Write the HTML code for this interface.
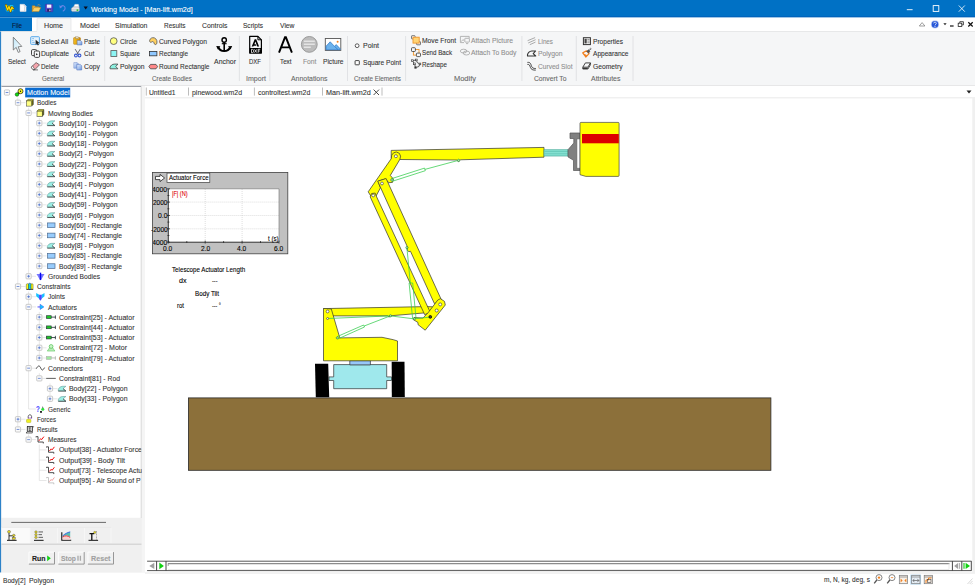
<!DOCTYPE html>
<html><head><meta charset="utf-8"><title>Working Model - [Man-lift.wm2d]</title>
<style>
html,body{margin:0;padding:0;width:975px;height:585px;overflow:hidden;background:#fff;font-family:"Liberation Sans", sans-serif;}
#app{position:relative;width:975px;height:585px;overflow:hidden;}
#g{position:absolute;left:0;top:0;}
.t{position:absolute;-webkit-text-stroke:0.1px currentColor;white-space:pre;transform-origin:0 50%;font-family:"Liberation Sans", sans-serif;display:block;}
</style></head><body><div id="app">
<svg id="g" width="975" height="585" viewBox="0 0 975 585">
<!-- 00_bg.svg -->
<rect x="0" y="0" width="975" height="585" fill="#fff"/>
<!-- title bar -->
<rect x="0" y="0" width="975" height="17.500" fill="#0071c5"/><rect x="0" y="16.300" width="975" height="1.200" fill="#0060b8"/>
<!-- menu row -->
<rect x="0" y="17.500" width="975" height="14" fill="#fff"/>
<rect x="0" y="17.400" width="32" height="14.100" fill="#0071c5"/>
<rect x="37" y="18.5" width="34" height="14" fill="#f5f6f7"/>
<path d="M37 31.5V18.5H71V31.5" fill="none" stroke="#e2e3e4" stroke-width="0.7"/>
<!-- ribbon -->
<rect x="0" y="31.5" width="975" height="53.5" fill="#f5f6f7"/>
<path d="M0 31.5H37M71 31.5H975" stroke="#e2e3e4" stroke-width="0.8"/>
<rect x="37.4" y="30" width="33.2" height="3" fill="#f5f6f7"/>
<rect x="0" y="85" width="975" height="0.8" fill="#dadbdc"/>
<g stroke="#dcdddf" stroke-width="0.8">
<path d="M104.7 36V81M239.4 36V81M269.8 36V81M347.5 36V81M405.6 36V81M521.9 36V81M576.3 36V81M633 36V81"/>
</g>
<!-- left panel -->
<rect x="0" y="85.8" width="145" height="487" fill="#f0f0f0"/>
<rect x="1.5" y="86.5" width="139.7" height="431.3" fill="#fff"/>
<path d="M1.5 86.5H141.2" stroke="#828790" stroke-width="0.8"/>
<path d="M141.2 86.5V518" stroke="#c8c8c8" stroke-width="0.7"/>
<rect x="141.8" y="85.8" width="3.2" height="487" fill="#f5f5f5"/>
<rect x="0" y="31.500" width="1.100" height="541" fill="#2d82c8"/>
<!-- tab bar -->
<rect x="145" y="85.8" width="830" height="12" fill="#fff"/>
<path d="M145 97.8H975" stroke="#e4e4e4" stroke-width="0.8"/>
<g stroke="#a0a0a0" stroke-width="0.7"><path d="M146.3 87.5V95.6M188.5 87.5V95.6M254.4 87.5V95.6M322.5 87.5V95.6M382 87.5V95.6"/></g>
<path d="M373.6 89.6L379 95M379 89.6L373.6 95" stroke="#333" stroke-width="0.9" fill="none"/>
<path d="M966.5 90.5h5l-2.5 3z" fill="#222"/>
<!-- status bar -->
<rect x="0" y="572.8" width="975" height="12.2" fill="#fff"/>
<path d="M145 573H975" stroke="#e0e0e0" stroke-width="0.8"/>
<rect x="972.3" y="98" width="2.7" height="475" fill="#f0f0f0"/>

<!-- 10_title_icons.svg -->
<!-- app icon -->
<g>
<rect x="5.800" y="5" width="7.600" height="6.400" fill="#18c0e8" rx="1"/>
<path d="M6 5.2l1.6 4.8 1.4-3.6 1.5 5 1.4-4.2 1.3 1.4" fill="none" stroke="#705000" stroke-width="2.2" stroke-linejoin="round" stroke-linecap="round"/>
<path d="M6 5.2l1.6 4.8 1.4-3.6 1.5 5 1.4-4.2 1.3 1.4" fill="none" stroke="#ffe000" stroke-width="1.2" stroke-linejoin="round" stroke-linecap="round"/>
</g>
<!-- new -->
<path d="M20 4.3h4.2l1.9 1.9v5.2H20z" fill="#fdfdfd" stroke="#cfd6e0" stroke-width="0.5"/>
<path d="M24.2 4.3v1.9h1.9" fill="#d8dde6" stroke="#b0b8c8" stroke-width="0.4"/>
<path d="M24.6 7v4.4H21" fill="none" stroke="#c8ccd4" stroke-width="0.8"/>
<!-- open -->
<path d="M32.2 11.6V5.8h2.6l.8.9h3.6v1.2" fill="#e8b040" stroke="#b07818" stroke-width="0.5"/>
<path d="M32.2 11.6l1.7-4h6.9l-1.9 4z" fill="#f8d068" stroke="#b88020" stroke-width="0.5"/>
<path d="M37.5 5.2c1-.8 2.2-.6 2.8.4" fill="none" stroke="#e0a030" stroke-width="0.6"/>
<!-- save -->
<rect x="45.4" y="4.3" width="7.4" height="7.4" fill="#5a48c8" stroke="#3a2c98" stroke-width="0.5" rx="0.5"/>
<rect x="46.9" y="4.6" width="4.4" height="3.2" fill="#f4f4ff"/>
<rect x="47.2" y="9" width="3.8" height="2.6" fill="#2a2060"/>
<rect x="49.3" y="9.5" width="1.2" height="1.7" fill="#d0d0e8"/>
<!-- undo -->
<path d="M60.6 7.2c1.4-2.4 4.4-1.8 4.5.8.1 1.6-.8 2.4-1.9 3" fill="none" stroke="#6a86e6" stroke-width="1.1" stroke-linecap="round"/>
<path d="M59.3 5.2l.6 3.2 2.6-1.6z" fill="#6a86e6"/>
<!-- print -->
<path d="M73.4 7.2l1.5-2.9h3.5l.8 2.9z" fill="#fff" stroke="#b8c0c8" stroke-width="0.4"/>
<path d="M71.4 8.2l1.6-1.3h5.8l.6 1.3v2.6l-.9.8h-6.2l-.9-.8z" fill="#e4e6ea" stroke="#9098a4" stroke-width="0.5"/>
<path d="M71.4 9.8h8" stroke="#a8b0bc" stroke-width="0.5"/>
<rect x="76.6" y="9.4" width="1.7" height="1.5" fill="#20c020"/>
<!-- dropdown -->
<path d="M83.6 6.6h4.2l-2.1 2.9z" fill="#0a0a18"/>
<!-- window controls -->
<path d="M906.8 9.7h5.8" stroke="#fff" stroke-width="0.9"/>
<rect x="933.2" y="5.6" width="5.6" height="5.8" fill="none" stroke="#fff" stroke-width="0.9"/>
<path d="M958.8 5.5l6 6.2M964.8 5.5l-6 6.2" stroke="#fff" stroke-width="0.8"/>
<!-- mdi controls -->
<path d="M919.3 26l2.8-3.4 2.8 3.4z" fill="#fff" stroke="#777" stroke-width="0.7" stroke-linejoin="round"/>
<circle cx="935" cy="24.4" r="4.1" fill="#c8d4f4"/>
<circle cx="935" cy="24.4" r="3.3" fill="#2858d8"/>
<path d="M933.6 23.3c.1-1.6 2.9-1.5 2.7.1-.1.8-1.2 1-1.3 2" fill="none" stroke="#fff" stroke-width="0.8"/>
<circle cx="935" cy="26.6" r=".5" fill="#fff"/>
<path d="M943.4 23.2h3.2l-1.6 2z" fill="#222"/>
<path d="M950 26h3.6" stroke="#222" stroke-width="1.3"/>
<rect x="958.2" y="23.2" width="3.6" height="3.2" fill="#fff" stroke="#222" stroke-width="0.8"/>
<path d="M959.8 23v-1.3h3.6v3.2h-1.5" fill="none" stroke="#222" stroke-width="0.8"/>
<path d="M968.3 22.2l4.4 4.3M972.7 22.2l-4.4 4.3" stroke="#111" stroke-width="1.2"/>

<!-- 20_ribbon_icons.svg -->
<defs>
<linearGradient id="selg" x1="0" y1="0" x2="1" y2="1"><stop offset="0" stop-color="#bfe6f8"/><stop offset="1" stop-color="#ffffff"/></linearGradient>
<linearGradient id="gold" x1="0" y1="0" x2="1" y2="0"><stop offset="0" stop-color="#f8c020"/><stop offset="1" stop-color="#c88808"/></linearGradient>
<linearGradient id="pg" x1="0" y1="0" x2="1" y2="1"><stop offset="0" stop-color="#e8f0ff"/><stop offset="1" stop-color="#6a98e0"/></linearGradient>
</defs>
<!-- Select arrow -->
<path d="M13.3 37.2V50l2.9-2.6 2 5 1.9-.8-2-4.8 3.7-.4z" fill="url(#selg)" stroke="#6c6c6c" stroke-width="0.8" stroke-linejoin="round"/>
<!-- Select All -->
<rect x="30.7" y="36.7" width="8.7" height="7.7" rx="0.8" fill="#e6f2fc" stroke="#4aa0e8" stroke-width="0.9"/>
<path d="M32.3 38.6h1.6M32.3 42.4h2.4M32.3 40.5h1" stroke="#4aa0e8" stroke-width="0.7"/>
<path d="M35.8 40v4.6l1.1-1 .9 1.7.9-.5-.9-1.6 1.5-.2z" fill="#222" stroke="#222" stroke-width="0.3"/>
<!-- Duplicate -->
<rect x="31.5" y="49.6" width="5.3" height="6" rx="1.2" fill="#f5f6f7" stroke="#333" stroke-width="0.9"/>
<rect x="34.3" y="51" width="5.3" height="6.4" rx="1.2" fill="#f5f6f7" stroke="#333" stroke-width="0.9"/>
<path d="M36 53.2v2l2-1z" fill="#222"/>
<!-- Delete (eraser) -->
<path d="M31.2 67.2l4.9-4.6 3.4 2.2-4.6 4.8-1.9.1z" fill="#f4a4ac" stroke="#444" stroke-width="0.7" stroke-linejoin="round"/>
<path d="M31.2 67.2l1.8 2.5 1.9-.1-2.3-3.7z" fill="#fff" stroke="#444" stroke-width="0.6" stroke-linejoin="round"/>
<path d="M33 69.9h5" stroke="#444" stroke-width="0.7"/>
<!-- Paste -->
<rect x="73.6" y="37.6" width="6.8" height="6.7" rx="0.6" fill="url(#gold)" stroke="#a87008" stroke-width="0.5"/>
<rect x="75.3" y="36.9" width="3.4" height="1.8" fill="#f0e8d0" stroke="#806020" stroke-width="0.4"/>
<path d="M77.2 40.4h3.3l1.5 1.5v3H77.2z" fill="url(#pg)" stroke="#4a6ab0" stroke-width="0.5"/>
<!-- Cut -->
<path d="M75.3 49.4l3.2 5M80.1 49.4l-3.2 5" stroke="#5a5a66" stroke-width="0.9" stroke-linecap="round"/>
<circle cx="75.9" cy="55.5" r="1.4" fill="none" stroke="#3858d0" stroke-width="1.1"/>
<circle cx="79.5" cy="55.5" r="1.4" fill="none" stroke="#3858d0" stroke-width="1.1"/>
<!-- Copy -->
<path d="M73.8 62.6h3.4l1.2 1.2v4.4h-4.6z" fill="url(#pg)" stroke="#6a88c8" stroke-width="0.5"/>
<path d="M76.8 64.4h3.5l1.4 1.4v4.2h-4.9z" fill="url(#pg)" stroke="#4a6ab8" stroke-width="0.5"/>
<!-- Circle / Square / Polygon -->
<circle cx="113.7" cy="41.1" r="3.4" fill="#ffff80" stroke="#555" stroke-width="0.8"/>
<rect x="110.9" y="50.6" width="5.9" height="5.9" fill="#8cf4f4" stroke="#555" stroke-width="0.8"/>
<path d="M110.1 68.8v-1.6c.6-1.800 2-3 4.4-3.100h3.400l-2.100 2.400 2.100 2.300z" fill="#8cf0e0" stroke="#444" stroke-width="0.8" stroke-linejoin="round"/>
<!-- Curved polygon -->
<path d="M149.600 40.600c.3-2.200 2.700-3.500 4.800-2.700 2.300.900 3.200 3.600 2.200 6-.5.900-1.700.9-2.200.1-.5-1.100-.7-2.700-1.900-2.400-.9.200-1.300.9-2 .7-.6-.2-1-.9-.9-1.700z" fill="#ffd060" stroke="#555" stroke-width="0.8"/>
<rect x="149.500" y="51.400" width="7.400" height="4.400" fill="#90c8ff" stroke="#333" stroke-width="0.8"/>
<path d="M148.900 66.600l1.600-2.200h5.500l1.600 2.200-1.600 2.200h-5.500z" fill="#ff8888" stroke="#444" stroke-width="0.8" stroke-linejoin="round"/>
<!-- Anchor -->
<g fill="none" stroke="#000">
<circle cx="224.200" cy="40" r="2.200" stroke-width="1.400"/>
<path d="M224.200 42.300v8.800" stroke-width="1.600"/><path d="M221.800 43.700h4.800" stroke-width="1.100"/>
<path d="M218.400 47.300c1 2.600 3 3.700 5.800 3.800 2.800-.1 4.800-1.200 5.800-3.800" stroke-width="2"/>
</g>
<path d="M216.200 46l4.200.3-2.600 3.300zM232.200 46l-4.200.3 2.600 3.300z" fill="#000"/>
<!-- DXF -->
<path d="M249.700 36.300h8.200l3.500 3.500v13.300h-11.700z" fill="#f5f6f7" stroke="#000" stroke-width="1.200" stroke-linejoin="round"/>
<path d="M257.900 36.300v3.500h3.500" fill="none" stroke="#000" stroke-width="1"/>
<rect x="249.700" y="48" width="11.700" height="5.100" fill="#000"/>
<path d="M251.700 46.600l3-7.400h1.500l2.900 7.400h-1.900l-1.800-5-1 2.600h1.300l.6 1.500h-2.600l-.3.900z" fill="#000"/>
<g fill="none" stroke="#fff" stroke-width="0.750">
<path d="M251.500 49.300v3.400h.8c2 0 2-3.400 0-3.400z"/>
<path d="M254.500 49.300l2.400 3.400M256.900 49.300l-2.400 3.400"/>
<path d="M258.200 52.700v-3.400h2M258.200 51h1.600"/>
</g>
<!-- Text A -->
<path d="M279 52.600l6-15.300h.9l6 15.300M281.200 47.400h8.500" fill="none" stroke="#000" stroke-width="1.900" stroke-linejoin="miter"/>
<!-- Font -->
<circle cx="309.300" cy="44.400" r="7.900" fill="#bcbcbc" stroke="#9a9a9a" stroke-width="1"/>
<path d="M303.800 41.300h11M303.800 44.300h11M303.800 47.300h7" stroke="#e4e4e4" stroke-width="1.500"/>
<!-- Picture -->
<rect x="325.300" y="38.500" width="15.500" height="11.900" fill="#fff" stroke="#555" stroke-width="0.9"/>
<path d="M326 49.700v-3.400l4.200-4.500 4.300 4.600 1.700-1.800 4 4.200v.9z" fill="#6cb2ec" stroke="#2a74c4" stroke-width="0.700" stroke-linejoin="round"/>
<path d="M334.500 46.400l3.600 3.300" stroke="#2a74c4" stroke-width="0.700"/>
<circle cx="337.600" cy="41.700" r="1" fill="#f08020"/>
<!-- Point -->
<circle cx="357.100" cy="45.700" r="1.900" fill="#fff" stroke="#333" stroke-width="0.800"/>
<rect x="355.100" y="60.600" width="4.200" height="4.200" fill="#fff" stroke="#333" stroke-width="0.900" rx="0.500"/>

<!-- 21_ribbon_icons2.svg -->
<!-- Move Front -->
<rect x="411.500" y="35.700" width="3.600" height="3.200" fill="none" stroke="#444" stroke-width="0.700" rx="0.500"/>
<rect x="416.600" y="41.600" width="3.900" height="3.200" fill="none" stroke="#444" stroke-width="0.700" rx="0.500"/>
<rect x="413" y="37.200" width="6.200" height="5.900" fill="#ffd474" stroke="#f09428" stroke-width="0.900"/>
<!-- Send Back -->
<rect x="413.400" y="49.500" width="5.600" height="5.600" fill="none" stroke="#f09428" stroke-width="0.900"/>
<rect x="411.500" y="47.700" width="3.900" height="3.800" fill="#f5f6f7" stroke="#333" stroke-width="0.800" rx="0.800"/>
<rect x="416.400" y="53.100" width="4.100" height="3.500" fill="#f5f6f7" stroke="#333" stroke-width="0.800" rx="0.800"/>
<!-- Reshape -->
<path d="M412.400 60.600l3.900-.6 .9 2.500 2.700 1.500-1 2.500-3.300 1.100-1.100-3.700z" fill="none" stroke="#333" stroke-width="0.800" stroke-linejoin="round"/>
<g fill="#f5f6f7" stroke="#333" stroke-width="0.600"><rect x="411.500" y="59.800" width="1.700" height="1.700"/><rect x="415.500" y="59.100" width="1.700" height="1.700"/><rect x="419.100" y="63.100" width="1.700" height="1.700"/><rect x="414.700" y="66.800" width="1.700" height="1.700"/><rect x="413.600" y="63" width="1.700" height="1.700"/></g>
<!-- Attach Picture -->
<g fill="none" stroke="#a4a4a4" stroke-width="0.800">
<path d="M464 42.600h-3.600v-6.200h8.800v1.800"/>
<path d="M461.300 41.600l1.600-2 1.200 1"/>
<rect x="464.800" y="38.300" width="4.600" height="3.800" rx="0.500"/>
<path d="M466 43.600h2.200"/>
<!-- Attach to body -->
<ellipse cx="463.600" cy="51.100" rx="3.300" ry="1.900"/>
<ellipse cx="466.400" cy="53" rx="3.300" ry="2"/>
</g>
<!-- Lines -->
<path d="M527.600 40.700l7.500-3.100M528.200 43l7.400-3.300M529.800 44.700l5.700-2.600" stroke="#8a8a8a" stroke-width="0.700"/>
<!-- Polygon outline -->
<path d="M527.500 56v-1.300c.500-2 1.900-3.500 4.300-3.700h3.800l-2.400 2.600 2.500 2.400z" fill="none" stroke="#333" stroke-width="1.100" stroke-linejoin="round"/>
<!-- Curved slot -->
<path d="M527.400 62.400c3.400-.4 3.400 2 4.200 4 .7 1.700 1.900 2.100 4.200 2.100M527.400 64.400c2.200-.3 2.400 1.300 3 3 .7 2 2.400 2.900 5.400 2.700" fill="none" stroke="#333" stroke-width="0.900"/>
<!-- Properties -->
<rect x="583.400" y="37.700" width="7" height="6.900" fill="#f0f0f0" stroke="#333" stroke-width="1"/>
<rect x="584.500" y="38.800" width="2.200" height="4.600" fill="#444"/>
<path d="M587.400 39.500h2.200M587.400 41.100h2.200M587.400 42.700h2.200" stroke="#777" stroke-width="0.700"/>
<!-- Appearance -->
<path d="M582.700 52.900l3.800-2.100 2.600 2.900-3.300 3.300z" fill="#f5f6f7" stroke="#f08020" stroke-width="1.200" stroke-linejoin="round"/>
<path d="M582.700 52.900l2.900 3.900 1.600-1.600z" fill="#f08020"/>
<path d="M586.600 51.600l1.800-1.900 1.600 1.500-1.600 2.100" fill="#555" stroke="#444" stroke-width="0.600"/>
<path d="M589.400 50.300l1-1.300" stroke="#444" stroke-width="0.800"/>
<circle cx="590.600" cy="48.800" r="0.600" fill="none" stroke="#444" stroke-width="0.500"/>
<!-- Geometry -->
<path d="M582.800 67.200l2.600-4.300h5.100l-2.600 4.300z" fill="#f5f6f7" stroke="#333" stroke-width="0.900" stroke-linejoin="round"/>
<path d="M582.800 67.200v1.800h5.100l2.600-4.300v-1.800" fill="none" stroke="#333" stroke-width="0.900" stroke-linejoin="round"/>
<path d="M583 68.400h4.700" stroke="#333" stroke-width="1.200"/>

<!-- 30_tree.svg -->
<path d="M17.8 97.5V426.4M28.6 107.7V273.3M28.6 291.5V409.0M28.6 434.4V436.6M39.3 117.9V263.1M39.3 311.9V355.0M39.3 373.2V375.4M39.3 444.6V480.5M50 383.4V395.8M21 102.7H25.5M31.6 112.9H36.0M42.3 123.1H46.5M42.3 133.3H46.5M42.3 143.6H46.5M42.3 153.8H46.5M42.3 164.0H46.5M42.3 174.2H46.5M42.3 184.4H46.5M42.3 194.6H46.5M42.3 204.8H46.5M42.3 215.0H46.5M42.3 225.2H46.5M42.3 235.4H46.5M42.3 245.7H46.5M42.3 255.9H46.5M42.3 266.1H46.5M31.6 276.3H36.0M21 286.5H25.5M31.6 296.7H36.0M31.6 306.9H36.0M42.3 317.1H46.5M42.3 327.3H46.5M42.3 337.5H46.5M42.3 347.8H46.5M42.3 358.0H46.5M31.6 368.2H36.0M42.3 378.4H46.5M53 388.6H57.5M53 398.8H57.5M28.6 409.0H36.0M21 419.2H25.5M21 429.4H25.5M31.6 439.6H36.0M39.3 449.9H46.5M39.3 460.1H46.5M39.3 470.3H46.5M39.3 480.5H46.5" stroke="#dcdcdc" stroke-width="0.7" fill="none"/>
<rect x="25.200" y="87.700" width="45" height="9.700" fill="#0a6bd0"/>
<rect x="4.4" y="89.9" width="5.200" height="5.200" rx="0.800" fill="#fafafa" stroke="#b4b4b4" stroke-width="0.700"/><path d="M5.6 92.5h2.800" stroke="#3c64c8" stroke-width="0.700"/>
<path d="M17 94.5l3.600 -3.200" stroke="#111" stroke-width="2"/><circle cx="17" cy="94.5" r="1.800" fill="#10d810" stroke="#084008" stroke-width="0.500"/><circle cx="20.5" cy="91.2" r="2.500" fill="#ffff20" stroke="#111" stroke-width="0.700"/><circle cx="20.5" cy="91.2" r="0.700" fill="#111"/>
<rect x="15.4" y="100.11" width="5.200" height="5.200" rx="0.800" fill="#fafafa" stroke="#b4b4b4" stroke-width="0.700"/><path d="M16.6 102.71h2.800" stroke="#3c64c8" stroke-width="0.700"/>
<path d="M26.5 100.91l1.600-1.600h5.200v5.200l-1.600 1.600z" fill="#6a6a10" stroke="#222" stroke-width="0.500" stroke-linejoin="round"/><path d="M26.5 100.91l1.600-1.600h5.200l-1.600 1.600z" fill="#b4b440"/><rect x="26.5" y="100.91" width="5.200" height="5.200" fill="#ffff80" stroke="#333" stroke-width="0.500"/>
<rect x="26.0" y="110.32000000000001" width="5.200" height="5.200" rx="0.800" fill="#fafafa" stroke="#b4b4b4" stroke-width="0.700"/><path d="M27.200000000000003 112.92h2.800" stroke="#3c64c8" stroke-width="0.700"/>
<path d="M36.2 116.62l1-1h5.500l-1 1z" fill="#b0b0b0"/><path d="M37.0 111.12l1.600-1.600h5.200v5.200l-1.600 1.600z" fill="#6a6a10" stroke="#222" stroke-width="0.500" stroke-linejoin="round"/><path d="M37.0 111.12l1.600-1.600h5.200l-1.600 1.600z" fill="#b4b440"/><rect x="37.0" y="111.12" width="5.200" height="5.200" fill="#ffff80" stroke="#333" stroke-width="0.500"/>
<rect x="36.699999999999996" y="120.53" width="5.200" height="5.200" rx="0.800" fill="#fafafa" stroke="#b4b4b4" stroke-width="0.700"/><path d="M37.9 123.13h2.800" stroke="#3c64c8" stroke-width="0.700"/><path d="M39.3 121.72999999999999v2.800" stroke="#3c64c8" stroke-width="0.700"/>
<path d="M47.3 125.53v-1.400c.600-1.900 2-3.200 4.300-3.300h3.300l-2.800 2.300 2.800 2.400z" fill="#9ceee4" stroke="#5a8c8c" stroke-width="0.500" stroke-linejoin="round"/><path d="M47.3 125.63h7.600l-2.800-2.400" stroke="#333" stroke-width="0.700" fill="none"/>
<rect x="36.699999999999996" y="130.74" width="5.200" height="5.200" rx="0.800" fill="#fafafa" stroke="#b4b4b4" stroke-width="0.700"/><path d="M37.9 133.34h2.800" stroke="#3c64c8" stroke-width="0.700"/><path d="M39.3 131.94v2.800" stroke="#3c64c8" stroke-width="0.700"/>
<path d="M47.3 135.74v-1.400c.600-1.900 2-3.200 4.300-3.300h3.300l-2.800 2.300 2.800 2.400z" fill="#9ceee4" stroke="#5a8c8c" stroke-width="0.500" stroke-linejoin="round"/><path d="M47.3 135.84h7.600l-2.800-2.400" stroke="#333" stroke-width="0.700" fill="none"/>
<rect x="36.699999999999996" y="140.95000000000002" width="5.200" height="5.200" rx="0.800" fill="#fafafa" stroke="#b4b4b4" stroke-width="0.700"/><path d="M37.9 143.55h2.800" stroke="#3c64c8" stroke-width="0.700"/><path d="M39.3 142.15v2.800" stroke="#3c64c8" stroke-width="0.700"/>
<path d="M47.3 145.95000000000002v-1.400c.600-1.900 2-3.200 4.300-3.300h3.300l-2.800 2.300 2.800 2.400z" fill="#9ceee4" stroke="#5a8c8c" stroke-width="0.500" stroke-linejoin="round"/><path d="M47.3 146.05h7.600l-2.800-2.400" stroke="#333" stroke-width="0.700" fill="none"/>
<rect x="36.699999999999996" y="151.16" width="5.200" height="5.200" rx="0.800" fill="#fafafa" stroke="#b4b4b4" stroke-width="0.700"/><path d="M37.9 153.76h2.800" stroke="#3c64c8" stroke-width="0.700"/><path d="M39.3 152.35999999999999v2.800" stroke="#3c64c8" stroke-width="0.700"/>
<path d="M47.3 156.16v-1.400c.600-1.900 2-3.200 4.300-3.300h3.300l-2.800 2.300 2.800 2.400z" fill="#9ceee4" stroke="#5a8c8c" stroke-width="0.500" stroke-linejoin="round"/><path d="M47.3 156.26h7.600l-2.800-2.400" stroke="#333" stroke-width="0.700" fill="none"/>
<rect x="36.699999999999996" y="161.37" width="5.200" height="5.200" rx="0.800" fill="#fafafa" stroke="#b4b4b4" stroke-width="0.700"/><path d="M37.9 163.97h2.800" stroke="#3c64c8" stroke-width="0.700"/><path d="M39.3 162.57v2.800" stroke="#3c64c8" stroke-width="0.700"/>
<path d="M47.3 166.37v-1.400c.600-1.900 2-3.200 4.300-3.300h3.300l-2.800 2.300 2.800 2.400z" fill="#9ceee4" stroke="#5a8c8c" stroke-width="0.500" stroke-linejoin="round"/><path d="M47.3 166.47h7.600l-2.800-2.400" stroke="#333" stroke-width="0.700" fill="none"/>
<rect x="36.699999999999996" y="171.58" width="5.200" height="5.200" rx="0.800" fill="#fafafa" stroke="#b4b4b4" stroke-width="0.700"/><path d="M37.9 174.18h2.800" stroke="#3c64c8" stroke-width="0.700"/><path d="M39.3 172.78v2.800" stroke="#3c64c8" stroke-width="0.700"/>
<path d="M47.3 176.58v-1.400c.600-1.900 2-3.200 4.300-3.300h3.300l-2.800 2.300 2.800 2.400z" fill="#9ceee4" stroke="#5a8c8c" stroke-width="0.500" stroke-linejoin="round"/><path d="M47.3 176.68h7.600l-2.800-2.400" stroke="#333" stroke-width="0.700" fill="none"/>
<rect x="36.699999999999996" y="181.79" width="5.200" height="5.200" rx="0.800" fill="#fafafa" stroke="#b4b4b4" stroke-width="0.700"/><path d="M37.9 184.39h2.800" stroke="#3c64c8" stroke-width="0.700"/><path d="M39.3 182.98999999999998v2.800" stroke="#3c64c8" stroke-width="0.700"/>
<path d="M47.3 186.79v-1.400c.600-1.900 2-3.200 4.300-3.300h3.300l-2.800 2.300 2.800 2.400z" fill="#9ceee4" stroke="#5a8c8c" stroke-width="0.500" stroke-linejoin="round"/><path d="M47.3 186.89h7.600l-2.800-2.400" stroke="#333" stroke-width="0.700" fill="none"/>
<rect x="36.699999999999996" y="192.0" width="5.200" height="5.200" rx="0.800" fill="#fafafa" stroke="#b4b4b4" stroke-width="0.700"/><path d="M37.9 194.6h2.800" stroke="#3c64c8" stroke-width="0.700"/><path d="M39.3 193.2v2.800" stroke="#3c64c8" stroke-width="0.700"/>
<path d="M47.3 197.0v-1.400c.600-1.900 2-3.200 4.300-3.300h3.300l-2.800 2.300 2.800 2.400z" fill="#9ceee4" stroke="#5a8c8c" stroke-width="0.500" stroke-linejoin="round"/><path d="M47.3 197.1h7.600l-2.800-2.400" stroke="#333" stroke-width="0.700" fill="none"/>
<rect x="36.699999999999996" y="202.21" width="5.200" height="5.200" rx="0.800" fill="#fafafa" stroke="#b4b4b4" stroke-width="0.700"/><path d="M37.9 204.81h2.800" stroke="#3c64c8" stroke-width="0.700"/><path d="M39.3 203.41v2.800" stroke="#3c64c8" stroke-width="0.700"/>
<path d="M47.3 207.21v-1.400c.600-1.900 2-3.200 4.300-3.300h3.300l-2.800 2.300 2.800 2.400z" fill="#9ceee4" stroke="#5a8c8c" stroke-width="0.500" stroke-linejoin="round"/><path d="M47.3 207.31h7.600l-2.800-2.400" stroke="#333" stroke-width="0.700" fill="none"/>
<rect x="36.699999999999996" y="212.42000000000002" width="5.200" height="5.200" rx="0.800" fill="#fafafa" stroke="#b4b4b4" stroke-width="0.700"/><path d="M37.9 215.02h2.800" stroke="#3c64c8" stroke-width="0.700"/><path d="M39.3 213.62v2.800" stroke="#3c64c8" stroke-width="0.700"/>
<path d="M47.3 217.42000000000002v-1.400c.600-1.900 2-3.200 4.300-3.300h3.300l-2.800 2.300 2.800 2.400z" fill="#9ceee4" stroke="#5a8c8c" stroke-width="0.500" stroke-linejoin="round"/><path d="M47.3 217.52h7.600l-2.800-2.400" stroke="#333" stroke-width="0.700" fill="none"/>
<rect x="36.699999999999996" y="222.63" width="5.200" height="5.200" rx="0.800" fill="#fafafa" stroke="#b4b4b4" stroke-width="0.700"/><path d="M37.9 225.23h2.800" stroke="#3c64c8" stroke-width="0.700"/><path d="M39.3 223.82999999999998v2.800" stroke="#3c64c8" stroke-width="0.700"/>
<rect x="47.6" y="222.92999999999998" width="7.400" height="4.600" fill="#98ccfc" stroke="#4a6a90" stroke-width="0.700"/>
<rect x="36.699999999999996" y="232.84" width="5.200" height="5.200" rx="0.800" fill="#fafafa" stroke="#b4b4b4" stroke-width="0.700"/><path d="M37.9 235.44h2.800" stroke="#3c64c8" stroke-width="0.700"/><path d="M39.3 234.04v2.800" stroke="#3c64c8" stroke-width="0.700"/>
<rect x="47.6" y="233.14" width="7.400" height="4.600" fill="#98ccfc" stroke="#4a6a90" stroke-width="0.700"/>
<rect x="36.699999999999996" y="243.05" width="5.200" height="5.200" rx="0.800" fill="#fafafa" stroke="#b4b4b4" stroke-width="0.700"/><path d="M37.9 245.65h2.800" stroke="#3c64c8" stroke-width="0.700"/><path d="M39.3 244.25v2.800" stroke="#3c64c8" stroke-width="0.700"/>
<path d="M47.3 248.05v-1.400c.600-1.900 2-3.200 4.300-3.300h3.300l-2.800 2.300 2.800 2.400z" fill="#9ceee4" stroke="#5a8c8c" stroke-width="0.500" stroke-linejoin="round"/><path d="M47.3 248.15h7.600l-2.800-2.400" stroke="#333" stroke-width="0.700" fill="none"/>
<rect x="36.699999999999996" y="253.26000000000002" width="5.200" height="5.200" rx="0.800" fill="#fafafa" stroke="#b4b4b4" stroke-width="0.700"/><path d="M37.9 255.86h2.800" stroke="#3c64c8" stroke-width="0.700"/><path d="M39.3 254.46v2.800" stroke="#3c64c8" stroke-width="0.700"/>
<rect x="47.6" y="253.56" width="7.400" height="4.600" fill="#98ccfc" stroke="#4a6a90" stroke-width="0.700"/>
<rect x="36.699999999999996" y="263.46999999999997" width="5.200" height="5.200" rx="0.800" fill="#fafafa" stroke="#b4b4b4" stroke-width="0.700"/><path d="M37.9 266.07h2.800" stroke="#3c64c8" stroke-width="0.700"/><path d="M39.3 264.67v2.800" stroke="#3c64c8" stroke-width="0.700"/>
<rect x="47.6" y="263.77" width="7.400" height="4.600" fill="#98ccfc" stroke="#4a6a90" stroke-width="0.700"/>
<rect x="26.0" y="273.67999999999995" width="5.200" height="5.200" rx="0.800" fill="#fafafa" stroke="#b4b4b4" stroke-width="0.700"/><path d="M27.200000000000003 276.28h2.800" stroke="#3c64c8" stroke-width="0.700"/><path d="M28.6 274.88v2.800" stroke="#3c64c8" stroke-width="0.700"/>
<path d="M36.5 273.97999999999996h8l-3.200 5.600h-1.600z" fill="#7878ff"/><path d="M39.8 272.67999999999995h1.400v7.400h-1.400z" fill="#0808f0"/>
<rect x="15.4" y="283.89" width="5.200" height="5.200" rx="0.800" fill="#fafafa" stroke="#b4b4b4" stroke-width="0.700"/><path d="M16.6 286.49h2.800" stroke="#3c64c8" stroke-width="0.700"/>
<rect x="26.3" y="283.69" width="2.300" height="5.600" rx="1" fill="#ffff10" stroke="#333" stroke-width="0.400"/><rect x="30.8" y="283.69" width="2.300" height="5.600" rx="1" fill="#ffff10" stroke="#333" stroke-width="0.400"/><rect x="28.5" y="283.19" width="2.400" height="6.400" rx="1" fill="#10d0f0" stroke="#222" stroke-width="0.400"/><path d="M26.3 289.49h7" stroke="#222" stroke-width="0.700"/>
<rect x="26.0" y="294.09999999999997" width="5.200" height="5.200" rx="0.800" fill="#fafafa" stroke="#b4b4b4" stroke-width="0.700"/><path d="M27.200000000000003 296.7h2.800" stroke="#3c64c8" stroke-width="0.700"/><path d="M28.6 295.3v2.800" stroke="#3c64c8" stroke-width="0.700"/>
<path d="M36.2 293.09999999999997l3 1.600v4l-3-2.400zM44.5 293.09999999999997l-3 1.600v4l3-2.400z" fill="#18c0ff"/><path d="M39.1 294.7h2.600v4.400l-1.300 1.600-1.300-1.600z" fill="#4848ff"/>
<rect x="26.0" y="304.31" width="5.200" height="5.200" rx="0.800" fill="#fafafa" stroke="#b4b4b4" stroke-width="0.700"/><path d="M27.200000000000003 306.91h2.800" stroke="#3c64c8" stroke-width="0.700"/>
<path d="M37.5 306.11h3v1.600h-3z" fill="#9090ff"/><path d="M40.1 304.31l3.800 2.600-3.800 2.600z" fill="#10c8ff" stroke="#3050f0" stroke-width="0.500" stroke-linejoin="round"/>
<rect x="36.699999999999996" y="314.52" width="5.200" height="5.200" rx="0.800" fill="#fafafa" stroke="#b4b4b4" stroke-width="0.700"/><path d="M37.9 317.12h2.800" stroke="#3c64c8" stroke-width="0.700"/><path d="M39.3 315.72v2.800" stroke="#3c64c8" stroke-width="0.700"/>
<path d="M46.5 317.12h9" stroke="#1c2c30" stroke-width="0.800"/><rect x="46.6" y="315.72" width="4.600" height="2.800" fill="#20c828" stroke="#1c2c30" stroke-width="0.600"/><path d="M55.4 315.42v3.400" stroke="#1c2c30" stroke-width="0.800"/>
<rect x="36.699999999999996" y="324.72999999999996" width="5.200" height="5.200" rx="0.800" fill="#fafafa" stroke="#b4b4b4" stroke-width="0.700"/><path d="M37.9 327.33h2.800" stroke="#3c64c8" stroke-width="0.700"/><path d="M39.3 325.93v2.800" stroke="#3c64c8" stroke-width="0.700"/>
<path d="M46.5 327.33h9" stroke="#1c2c30" stroke-width="0.800"/><rect x="46.6" y="325.93" width="4.600" height="2.800" fill="#20c828" stroke="#1c2c30" stroke-width="0.600"/><path d="M55.4 325.63v3.400" stroke="#1c2c30" stroke-width="0.800"/>
<rect x="36.699999999999996" y="334.94" width="5.200" height="5.200" rx="0.800" fill="#fafafa" stroke="#b4b4b4" stroke-width="0.700"/><path d="M37.9 337.54h2.800" stroke="#3c64c8" stroke-width="0.700"/><path d="M39.3 336.14000000000004v2.800" stroke="#3c64c8" stroke-width="0.700"/>
<path d="M46.5 337.54h9" stroke="#1c2c30" stroke-width="0.800"/><rect x="46.6" y="336.14000000000004" width="4.600" height="2.800" fill="#20c828" stroke="#1c2c30" stroke-width="0.600"/><path d="M55.4 335.84000000000003v3.400" stroke="#1c2c30" stroke-width="0.800"/>
<rect x="36.699999999999996" y="345.15" width="5.200" height="5.200" rx="0.800" fill="#fafafa" stroke="#b4b4b4" stroke-width="0.700"/><path d="M37.9 347.75h2.800" stroke="#3c64c8" stroke-width="0.700"/><path d="M39.3 346.35v2.800" stroke="#3c64c8" stroke-width="0.700"/>
<path d="M47.3 351.05l3.100-4.500h1.400l3.100 4.500z" fill="#b8ecb8" stroke="#60c860" stroke-width="0.600"/><circle cx="51.1" cy="346.45" r="1.900" fill="#c8f4c8" stroke="#50c050" stroke-width="0.700"/>
<rect x="36.699999999999996" y="355.35999999999996" width="5.200" height="5.200" rx="0.800" fill="#fafafa" stroke="#b4b4b4" stroke-width="0.700"/><path d="M37.9 357.96h2.800" stroke="#3c64c8" stroke-width="0.700"/><path d="M39.3 356.56v2.800" stroke="#3c64c8" stroke-width="0.700"/>
<path d="M46.5 357.96h9" stroke="#a8b0a8" stroke-width="0.800"/><rect x="46.6" y="356.56" width="4.600" height="2.800" fill="#a0e8a0" stroke="#a8b0a8" stroke-width="0.600"/><path d="M55.4 356.26v3.400" stroke="#a8b0a8" stroke-width="0.800"/>
<rect x="26.0" y="365.57" width="5.200" height="5.200" rx="0.800" fill="#fafafa" stroke="#b4b4b4" stroke-width="0.700"/><path d="M27.200000000000003 368.17h2.800" stroke="#3c64c8" stroke-width="0.700"/>
<path d="M36.2 368.77000000000004c2-3.600 3.300-3.600 4.600-.600 1.200 2.800 2.200 2.200 3.800-.600" fill="none" stroke="#222" stroke-width="0.800"/>
<rect x="36.699999999999996" y="375.78" width="5.200" height="5.200" rx="0.800" fill="#fafafa" stroke="#b4b4b4" stroke-width="0.700"/><path d="M37.9 378.38h2.800" stroke="#3c64c8" stroke-width="0.700"/>
<path d="M46.2 378.38h9.600" stroke="#333" stroke-width="0.800"/>
<rect x="47.4" y="385.98999999999995" width="5.200" height="5.200" rx="0.800" fill="#fafafa" stroke="#b4b4b4" stroke-width="0.700"/><path d="M48.6 388.59h2.800" stroke="#3c64c8" stroke-width="0.700"/><path d="M50 387.19v2.800" stroke="#3c64c8" stroke-width="0.700"/>
<path d="M58.3 390.98999999999995v-1.400c.600-1.900 2-3.200 4.300-3.300h3.300l-2.800 2.300 2.800 2.400z" fill="#9ceee4" stroke="#5a8c8c" stroke-width="0.500" stroke-linejoin="round"/><path d="M58.3 391.09h7.600l-2.800-2.400" stroke="#333" stroke-width="0.700" fill="none"/>
<rect x="47.4" y="396.2" width="5.200" height="5.200" rx="0.800" fill="#fafafa" stroke="#b4b4b4" stroke-width="0.700"/><path d="M48.6 398.8h2.800" stroke="#3c64c8" stroke-width="0.700"/><path d="M50 397.40000000000003v2.800" stroke="#3c64c8" stroke-width="0.700"/>
<path d="M58.3 401.2v-1.400c.600-1.900 2-3.200 4.300-3.300h3.300l-2.800 2.300 2.800 2.400z" fill="#9ceee4" stroke="#5a8c8c" stroke-width="0.500" stroke-linejoin="round"/><path d="M58.3 401.3h7.600l-2.800-2.400" stroke="#333" stroke-width="0.700" fill="none"/>
<circle cx="42.8" cy="409.31" r="1.500" fill="#30e040"/><rect x="40.1" y="411.01" width="1.800" height="1.800" fill="#111"/><path d="M42.2 407.81l.600-1.600.600 1.600" fill="#222"/>
<rect x="15.4" y="416.62" width="5.200" height="5.200" rx="0.800" fill="#fafafa" stroke="#b4b4b4" stroke-width="0.700"/><path d="M16.6 419.22h2.800" stroke="#3c64c8" stroke-width="0.700"/><path d="M18 417.82000000000005v2.800" stroke="#3c64c8" stroke-width="0.700"/>
<path d="M28.2 418.22v-1.600c0-2.400 3.400-2.400 3.400 0v1.600" fill="none" stroke="#222" stroke-width="0.700"/><path d="M28.9 417.22v1.800M31 417.22v1.800" stroke="#8020c0" stroke-width="0.700"/><rect x="26.5" y="419.22" width="4.400" height="3.400" rx="0.800" fill="#f0f020" stroke="#a0a000" stroke-width="0.400"/>
<rect x="15.4" y="426.83" width="5.200" height="5.200" rx="0.800" fill="#fafafa" stroke="#b4b4b4" stroke-width="0.700"/><path d="M16.6 429.43h2.800" stroke="#3c64c8" stroke-width="0.700"/>
<path d="M26 433.03000000000003l1.300-1.400v-5h6.300l-1.300 1.400v5z" fill="#e0e0e0" stroke="#222" stroke-width="0.600" stroke-linejoin="round"/><rect x="27.3" y="426.63" width="5" height="5" fill="#d0d0d0" stroke="#222" stroke-width="0.600"/><path d="M29.8 427.83v2.800M28.8 427.83h2M28.8 430.63h2" stroke="#222" stroke-width="0.600"/>
<rect x="26.0" y="437.03999999999996" width="5.200" height="5.200" rx="0.800" fill="#fafafa" stroke="#b4b4b4" stroke-width="0.700"/><path d="M27.200000000000003 439.64h2.800" stroke="#3c64c8" stroke-width="0.700"/>
<path d="M36.2 436.64h1.800v5.400h5.300v1.400" fill="none" stroke="#222" stroke-width="0.800"/><path d="M36.0 436.24v1.200" stroke="#222" stroke-width="0.600"/><path d="M38.9 440.84l1.800-2.200 .900 1 2.300-3" fill="none" stroke="#f01010" stroke-width="1"/>
<path d="M46.7 446.85h1.800v5.400h5.300v1.400" fill="none" stroke="#222" stroke-width="0.800"/><path d="M46.5 446.45000000000005v1.200" stroke="#222" stroke-width="0.600"/><path d="M49.4 451.05l1.800-2.200 .900 1 2.300-3" fill="none" stroke="#f01010" stroke-width="1"/>
<path d="M46.7 457.06h1.800v5.400h5.300v1.400" fill="none" stroke="#222" stroke-width="0.800"/><path d="M46.5 456.66v1.200" stroke="#222" stroke-width="0.600"/><path d="M49.4 461.26l1.800-2.200 .900 1 2.300-3" fill="none" stroke="#f01010" stroke-width="1"/>
<path d="M46.7 467.27h1.800v5.400h5.300v1.400" fill="none" stroke="#222" stroke-width="0.800"/><path d="M46.5 466.87v1.200" stroke="#222" stroke-width="0.600"/><path d="M49.4 471.46999999999997l1.800-2.200 .900 1 2.300-3" fill="none" stroke="#f01010" stroke-width="1"/>
<path d="M46.7 477.48h1.800v5.400h5.300v1.400" fill="none" stroke="#b8b8b8" stroke-width="0.800"/><path d="M46.5 477.08000000000004v1.200" stroke="#b8b8b8" stroke-width="0.600"/><path d="M49.4 481.68l1.800-2.200 .900 1 2.300-3" fill="none" stroke="#f0a0a0" stroke-width="1"/>
<!-- 40_bottom.svg -->
<!-- bottom-left panel -->
<path d="M11.300 522.400H106" stroke="#6a6a6a" stroke-width="1"/>
<rect x="1.500" y="527.500" width="28.500" height="16" fill="#fafafa"/>
<path d="M30 528V543M57.500 528V543M84.500 528V543M111 528V543" stroke="#f8f8f8" stroke-width="0.800"/>
<path d="M1.500 527.400H111" stroke="#e6e6e6" stroke-width="0.600"/>
<path d="M1.500 544.200H141.500" stroke="#c4c4c4" stroke-width="0.800"/>
<!-- icon 1 -->
<g transform="translate(0,52.700) scale(1,0.900)">
<path d="M7 541.800h9.600" stroke="#111" stroke-width="1.100"/>
<path d="M9 541.500v-8M9 536.800h4.500v2" stroke="#111" stroke-width="0.900" fill="none"/>
<circle cx="9" cy="532.300" r="1.500" fill="#e8d820" stroke="#555" stroke-width="0.500"/>
<circle cx="13.800" cy="536.300" r="1.300" fill="#e8d820" stroke="#555" stroke-width="0.500"/>
<rect x="12.200" y="538.500" width="3" height="2.400" fill="#e8d820" stroke="#555" stroke-width="0.500"/>
</g>
<!-- icon 2 -->
<g transform="translate(0,52.700) scale(1,0.900)">
<path d="M34 541.800h9.600" stroke="#111" stroke-width="1.100"/>
<path d="M38.500 532.500h4.500M38.500 535.500h3.500M38.500 538.500h4.500" stroke="#333" stroke-width="0.800"/>
<circle cx="36" cy="532.500" r="1.300" fill="#e0d020" stroke="#555" stroke-width="0.400"/>
<circle cx="36" cy="535.500" r="1.300" fill="#e0d020" stroke="#555" stroke-width="0.400"/>
<circle cx="36" cy="538.500" r="1.300" fill="#e0d020" stroke="#555" stroke-width="0.400"/>
</g>
<!-- icon 3 -->
<g transform="translate(0,52.700) scale(1,0.900)">
<path d="M61.800 532.800v9h9.400" stroke="#111" stroke-width="1.100" fill="none"/>
<path d="M62.600 537c2.400-2.600 4.800-3.800 7.600-4.600v5.800c-2.400-2.200-5.400-2.400-7.600-.2z" fill="#58c0b0"/>
<path d="M62.600 540.800v-2.600c2.200-2 5.200-1.800 7.600.4v2.200z" fill="#f8d0d0"/>
<path d="M62.600 538.200c2.200-2 5.200-1.800 7.600.4" stroke="#e82020" stroke-width="0.900" fill="none"/>
<path d="M62.600 537c2.400-2.600 4.800-3.800 7.600-4.600" stroke="#3858e8" stroke-width="0.900" fill="none"/>
</g>
<!-- icon 4 -->
<g transform="translate(0,52.700) scale(1,0.900)">
<path d="M88.500 541.800h9.600" stroke="#111" stroke-width="1.100"/>
<path d="M91.800 541.500v-7M89.500 534.400h4.800" stroke="#111" stroke-width="1.300" fill="none"/>
<path d="M96.500 531.500v10" stroke="#777" stroke-width="0.700" stroke-dasharray="1 0.700"/>
<circle cx="94.800" cy="533" r="1.200" fill="#e8d820" stroke="#555" stroke-width="0.400"/>
</g>
<!-- buttons -->
<g id="btns">
<rect x="28.600" y="551.800" width="26.100" height="12.400" fill="#f0f0f0"/>
<path d="M28.900 564V552.100H54.400" fill="none" stroke="#fff" stroke-width="0.800"/>
<path d="M28.900 564.100H54.500V552.100" fill="none" stroke="#8c8c8c" stroke-width="0.900"/>
<rect x="58.100" y="551.800" width="26.300" height="12.400" fill="#f0f0f0"/>
<path d="M58.400 564V552.100H84.100" fill="none" stroke="#fff" stroke-width="0.800"/>
<path d="M58.400 564.100H84.200V552.100" fill="none" stroke="#8c8c8c" stroke-width="0.900"/>
<rect x="87.600" y="551.800" width="26.100" height="12.400" fill="#f0f0f0"/>
<path d="M87.900 564V552.100H113.400" fill="none" stroke="#fff" stroke-width="0.800"/>
<path d="M87.900 564.100H113.500V552.100" fill="none" stroke="#8c8c8c" stroke-width="0.900"/>
<path d="M47.200 555.400l3.600 2.900-3.600 2.900z" fill="#10d010"/>
<path d="M78 555.800v5M80.400 555.800v5" stroke="#a8a8a8" stroke-width="1.300"/>
</g>
<!-- canvas scrollbar -->
<g>
<rect x="147.100" y="561.100" width="824.400" height="9.500" fill="#fff"/>
<path d="M147.100 561.200H971.500" stroke="#444" stroke-width="0.900"/>
<path d="M147.100 570.600H971.500" stroke="#444" stroke-width="0.900"/>
<path d="M156.600 561.200V570.600M166 561.200V570.600M952.400 561.200V570.600M961.800 561.200V570.600M971.300 561.200V570.600" stroke="#333" stroke-width="0.900"/>
<path d="M168 563.700H949.500" stroke="#8c8c8c" stroke-width="1.200"/>
<path d="M168.200 563.200V566" stroke="#8c8c8c" stroke-width="0.800"/>
<path d="M949 563.500V569.500H168" stroke="#e4e4e4" stroke-width="0.800" fill="none"/>
<path d="M154.300 562.800v6.200l-5-3.100z" fill="#a0a0a0"/>
<path d="M159.300 562.600v6.600l4.600-3.300z" fill="#10d010"/>
<path d="M958 562.900v6l-3.800-3z" fill="#a0a0a0"/><path d="M959.300 563v5.800" stroke="#a0a0a0" stroke-width="1"/>
<path d="M964 563v5.800" stroke="#10c810" stroke-width="1.100"/><path d="M965.600 562.700v6.400l4.400-3.200z" fill="#10d010"/>
</g>
<!-- status icons -->
<g>
<circle cx="879" cy="577.600" r="3" fill="#fff" stroke="#666" stroke-width="0.800"/>
<path d="M876.800 580l-2.600 3.300" stroke="#555" stroke-width="1.300"/>
<circle cx="879" cy="577.600" r="1.200" fill="#f08020"/>
<circle cx="892" cy="577.600" r="3" fill="#fff" stroke="#666" stroke-width="0.800"/>
<path d="M889.800 580l-2.600 3.300" stroke="#555" stroke-width="1.300"/>
<path d="M890.800 577.600h2.400" stroke="#f0a060" stroke-width="1.100"/>
<rect x="899.300" y="575.300" width="8.300" height="8.400" fill="#f8f0e8" stroke="#777" stroke-width="0.700"/>
<path d="M899.300 577h8.300" stroke="#777" stroke-width="0.700"/>
<path d="M900.600 578.500l2 2-2 2zM906.400 578.500l-2 2 2 2z" fill="#f08020"/>
<rect x="910.300" y="574.600" width="10.800" height="10" fill="#bcdcf4"/>
<rect x="911.700" y="575.300" width="8.300" height="8.400" fill="#e8f0f8" stroke="#777" stroke-width="0.700"/>
<path d="M911.700 577h8.300" stroke="#777" stroke-width="0.700"/>
<path d="M914.400 578.800l-1.500 1.700 1.500 1.700M917.300 578.800l1.500 1.700-1.500 1.700M913 580.500h5.800" stroke="#444" stroke-width="0.600" fill="none"/>
<rect x="924.200" y="575.300" width="8.300" height="8.400" fill="#f8f0e8" stroke="#777" stroke-width="0.700"/>
<path d="M924.200 577h8.300" stroke="#777" stroke-width="0.700"/>
<path d="M926 583v-3h2.500v-2h3" stroke="#f08020" stroke-width="1" fill="none"/>
<rect x="927.500" y="579.500" width="3.500" height="3" fill="none" stroke="#444" stroke-width="0.600"/>
<path d="M972.500 578.500l-5 5.500M972.500 581l-2.800 3M972.500 583.300l-1 1" stroke="#c8c8c8" stroke-width="0.700"/>
</g>

<!-- 50_canvas.svg -->
<!-- graph widget -->
<rect x="152.500" y="172.400" width="135.300" height="81.400" fill="#c0c0c0" stroke="#404040" stroke-width="0.800"/>
<rect x="167" y="173.100" width="42.800" height="9.300" fill="#fff" stroke="#404040" stroke-width="0.700"/>
<path d="M155.500 176.400h4.500v-2l4.600 3.600-4.600 3.600v-2h-4.500z" fill="#fff" stroke="#222" stroke-width="0.800" stroke-linejoin="round"/>
<rect x="168.300" y="188.800" width="110.700" height="53.300" fill="#fff"/>
<g stroke="#c4c4c4" stroke-width="0.700" stroke-dasharray="0.800 1.200">
<path d="M205.200 189V242M242.100 189V242M168.500 202.100H279M168.500 215.500H279M168.500 228.800H279"/>
</g>
<path d="M168.300 188.800V242.200H279" fill="none" stroke="#202020" stroke-width="0.900"/>
<path d="M279 188.800V242.200M168.300 188.800H279" fill="none" stroke="#707070" stroke-width="0.600"/>
<g stroke="#202020" stroke-width="0.700">
<path d="M167 188.800h3M167 202.100h3M167 215.500h3M167 228.800h3M167 242.200h3M167.400 195.500h2M167.400 208.800h2M167.400 222.100h2M167.400 235.500h2"/>
<path d="M168.300 240.600v3M205.200 240.600v3M242.100 240.600v3M279 240.600v3M186.800 241v2M223.600 241v2M260.500 241v2"/>
</g>

<!-- 60_lift.svg -->
<!-- ground -->
<rect x="188.400" y="397.900" width="582.500" height="72.400" fill="#8c703a" stroke="#2a2a2a" stroke-width="0.800"/>
<g stroke="#303030" stroke-width="0.700" stroke-linejoin="round">
<!-- wheels -->
<path d="M315 363.700h13.200l1 33.600h-13.400z" fill="#000" stroke="none"/>
<path d="M391.700 361.800h12.800l.3 35.200h-13z" fill="#000" stroke="none"/>
<!-- chassis -->
<path d="M333.700 364.600h53v12.300h4.800v3.600h-4.800v8.200h-53v-8.200h-4.700v-3.600h4.700z" fill="#9fe8ec"/>
<rect x="349.800" y="360.600" width="20.600" height="4.300" fill="#98c8f8"/>
<!-- lower arm C -->
<path d="M323.500 308.600l103.500-2 5.500.2v5.800l-9.100.4-33 2.800-1.200 1.400-1.600-1.400-55 .1z" fill="#ffff00"/>
<!-- body -->
<path d="M323.500 308.500l7.800.5 8.500 28.900 42.200-.600 11.300 2.400 4.200 1.300v19.800h-74z" fill="#ffff00"/>
<!-- boom -->
<path d="M391.200 150.400l152.800-3v9.800l-83.500 2.600-1.900 1.700-1.900-1.500-55.700-.5-9.800-.8z" fill="#ffff00"/>
<!-- link -->
<path d="M368.200 191.800L391.300 158.600l.4-3.400 1.900-2.400 2.800-.8 2.900 1.300 1.300 2.900-.8 3.300-9.500 15.900 3.100 3.600-.9 3.400-3.500.3-4-3.700-6.900 2.200 2.300 6.700-4.400 8.300-4.500 1z" fill="#ffff00"/>
<!-- thin arm B -->
<path d="M370.200 196.900l1.400-3.400 3.600-.4 .8 2.400 54.200 116.700-5.500 2.500z" fill="#ffff00"/>
<!-- thick arm A -->
<path d="M377.700 181.200l8.400-2.700 55.500 121.800-7.200 3.300-23.900-52.300-1.600.4-1.800-1.600.6-2.600z" fill="#ffff00"/>
<!-- end link -->
<path d="M437.800 300l2.700-1.300 4 2.700.8 3.600-20.100 25.200-7.200-5.600v-2.100l-4.800-3 .8-2 9 .5 5.200-5.400z" fill="#ffff00"/>
<!-- telescope -->
<rect x="544" y="149.700" width="24.200" height="6.300" fill="#88e4d4" stroke="#48a898"/>
<path d="M544.500 151.600h23.500M544.500 153.800h23.500" stroke="#48b0a0" stroke-width="0.500"/>
<!-- bracket -->
<path d="M570 133h10v37.500h-6.500v-10.200l-5.500-3.400v-7.200l5.800-6.700v-4.500h-3.800z" fill="#808080" stroke="#555"/>
<rect x="576.900" y="138.900" width="3.100" height="29.400" fill="#fff" stroke="#555" stroke-width="0.500"/>
<!-- basket -->
<path d="M580 123.400q0-1 1-1h37.100q1 0 1 1v52q0 1-1 1h-32.300l-5.800-1.700z" fill="#ffff00" stroke="#444" stroke-width="0.700"/>
<rect x="582" y="134" width="36.800" height="9.300" fill="#dc0000" stroke="none"/>
</g>
<!-- green actuators / rods -->
<g fill="none" stroke="#34cc4c" stroke-width="0.750">
<path d="M391.500 178.700l33-10.600 .8 2.600-33 10.600M424.900 169.400l33.700-9.100"/>
<path d="M406.900 247.500l3.400 35.500h-1.200l3.500 35.500M410.300 283h2.400l3.300 35.200"/>
<path d="M327.600 318.500l62.900-2.600 23.800 3 16-1.900"/>
<path d="M337 336.700l26.600-11.700 .9 2-26.500 11.900M364.200 326l26.300-10.200"/>
</g>
<g fill="#fff" stroke="#333" stroke-width="0.600">
<circle cx="395.900" cy="156.200" r="1.500"/><circle cx="382" cy="183.500" r="1.400"/><circle cx="373.200" cy="195.500" r="1.400"/>
<circle cx="327.600" cy="311.500" r="1.400"/><circle cx="440.200" cy="304.400" r="1.500"/><circle cx="436.700" cy="310.500" r="1.500"/>
<circle cx="327.600" cy="318.500" r="1"/>
</g>
<circle cx="430.300" cy="316.900" r="1.400" fill="#444" stroke="#000" stroke-width="0.700"/>
<g fill="#b0e8b0" stroke="#208030" stroke-width="0.600">
<circle cx="392" cy="180" r="1.300"/><circle cx="458.600" cy="160.400" r="1.200"/><circle cx="406.900" cy="247.600" r="1.100"/>
<circle cx="390.500" cy="315.800" r="1.100"/><circle cx="337.300" cy="337.900" r="1.100"/><circle cx="414.300" cy="318.800" r="1.100"/>
</g>

</svg>
<span class="t" style="left:90.75px;top:4.92px;font-size:8.1px;line-height:10.12px;color:#fff;transform:scaleX(0.8779);">Working Model - [Man-lift.wm2d]</span>
<span class="t" style="left:11.5px;top:21.12px;font-size:8.1px;line-height:10.12px;color:#0a1530;transform:scaleX(0.7665);">File</span>
<span class="t" style="left:44px;top:21.12px;font-size:8.1px;line-height:10.12px;color:#333;transform:scaleX(0.8799);">Home</span>
<span class="t" style="left:79.5px;top:21.12px;font-size:8.1px;line-height:10.12px;color:#333;transform:scaleX(0.8845);">Model</span>
<span class="t" style="left:115px;top:21.12px;font-size:8.1px;line-height:10.12px;color:#333;transform:scaleX(0.8599);">Simulation</span>
<span class="t" style="left:163.5px;top:21.12px;font-size:8.1px;line-height:10.12px;color:#333;transform:scaleX(0.7963);">Results</span>
<span class="t" style="left:201.5px;top:21.12px;font-size:8.1px;line-height:10.12px;color:#333;transform:scaleX(0.8460);">Controls</span>
<span class="t" style="left:243px;top:21.12px;font-size:8.1px;line-height:10.12px;color:#333;transform:scaleX(0.8081);">Scripts</span>
<span class="t" style="left:279.5px;top:21.12px;font-size:8.1px;line-height:10.12px;color:#333;transform:scaleX(0.8330);">View</span>
<span class="t" style="left:7.75px;top:56.92px;font-size:8.1px;line-height:10.12px;color:#333;transform:scaleX(0.7933);">Select</span>
<span class="t" style="left:41px;top:36.82px;font-size:8.1px;line-height:10.12px;color:#333;transform:scaleX(0.8139);">Select All</span>
<span class="t" style="left:41px;top:49.32px;font-size:8.1px;line-height:10.12px;color:#333;transform:scaleX(0.8296);">Duplicate</span>
<span class="t" style="left:41px;top:62.42px;font-size:8.1px;line-height:10.12px;color:#333;transform:scaleX(0.7733);">Delete</span>
<span class="t" style="left:83.5px;top:36.82px;font-size:8.1px;line-height:10.12px;color:#333;transform:scaleX(0.7680);">Paste</span>
<span class="t" style="left:83.5px;top:49.32px;font-size:8.1px;line-height:10.12px;color:#333;transform:scaleX(0.8129);">Cut</span>
<span class="t" style="left:83.5px;top:62.42px;font-size:8.1px;line-height:10.12px;color:#333;transform:scaleX(0.8410);">Copy</span>
<span class="t" style="left:120px;top:36.82px;font-size:8.1px;line-height:10.12px;color:#333;transform:scaleX(0.8218);">Circle</span>
<span class="t" style="left:120px;top:49.32px;font-size:8.1px;line-height:10.12px;color:#333;transform:scaleX(0.7660);">Square</span>
<span class="t" style="left:120px;top:62.42px;font-size:8.1px;line-height:10.12px;color:#333;transform:scaleX(0.8376);">Polygon</span>
<span class="t" style="left:159px;top:36.82px;font-size:8.1px;line-height:10.12px;color:#333;transform:scaleX(0.8334);">Curved Polygon</span>
<span class="t" style="left:159px;top:49.32px;font-size:8.1px;line-height:10.12px;color:#333;transform:scaleX(0.7955);">Rectangle</span>
<span class="t" style="left:159px;top:62.42px;font-size:8.1px;line-height:10.12px;color:#333;transform:scaleX(0.8074);">Round Rectangle</span>
<span class="t" style="left:213.5px;top:56.92px;font-size:8.1px;line-height:10.12px;color:#333;transform:scaleX(0.8575);">Anchor</span>
<span class="t" style="left:249px;top:56.92px;font-size:8.1px;line-height:10.12px;color:#333;transform:scaleX(0.7413);">DXF</span>
<span class="t" style="left:279.5px;top:56.92px;font-size:8.1px;line-height:10.12px;color:#333;transform:scaleX(0.7747);">Text</span>
<span class="t" style="left:302.5px;top:56.92px;font-size:8.1px;line-height:10.12px;color:#8e8e8e;transform:scaleX(0.8332);">Font</span>
<span class="t" style="left:322.5px;top:56.92px;font-size:8.1px;line-height:10.12px;color:#333;transform:scaleX(0.8134);">Picture</span>
<span class="t" style="left:363px;top:41.12px;font-size:8.1px;line-height:10.12px;color:#333;transform:scaleX(0.8671);">Point</span>
<span class="t" style="left:363px;top:58.22px;font-size:8.1px;line-height:10.12px;color:#333;transform:scaleX(0.8120);">Square Point</span>
<span class="t" style="left:422px;top:36.22px;font-size:8.1px;line-height:10.12px;color:#333;transform:scaleX(0.8305);">Move Front</span>
<span class="t" style="left:422px;top:48.12px;font-size:8.1px;line-height:10.12px;color:#333;transform:scaleX(0.7662);">Send Back</span>
<span class="t" style="left:422px;top:60.12px;font-size:8.1px;line-height:10.12px;color:#333;transform:scaleX(0.7715);">Reshape</span>
<span class="t" style="left:471px;top:36.22px;font-size:8.1px;line-height:10.12px;color:#8e8e8e;transform:scaleX(0.8335);">Attach Picture</span>
<span class="t" style="left:471px;top:48.12px;font-size:8.1px;line-height:10.12px;color:#8e8e8e;transform:scaleX(0.8380);">Attach To Body</span>
<span class="t" style="left:537.5px;top:36.82px;font-size:8.1px;line-height:10.12px;color:#8e8e8e;transform:scaleX(0.7748);">Lines</span>
<span class="t" style="left:537.5px;top:49.32px;font-size:8.1px;line-height:10.12px;color:#8e8e8e;transform:scaleX(0.8376);">Polygon</span>
<span class="t" style="left:537.5px;top:62.42px;font-size:8.1px;line-height:10.12px;color:#8e8e8e;transform:scaleX(0.8157);">Curved Slot</span>
<span class="t" style="left:592.5px;top:36.82px;font-size:8.1px;line-height:10.12px;color:#333;transform:scaleX(0.8132);">Properties</span>
<span class="t" style="left:592.5px;top:49.32px;font-size:8.1px;line-height:10.12px;color:#333;transform:scaleX(0.8132);">Appearance</span>
<span class="t" style="left:592.5px;top:62.42px;font-size:8.1px;line-height:10.12px;color:#333;transform:scaleX(0.8299);">Geometry</span>
<span class="t" style="left:42.4px;top:74.42px;font-size:8.1px;line-height:10.12px;color:#666;transform:scaleX(0.7674);">General</span>
<span class="t" style="left:152px;top:74.42px;font-size:8.1px;line-height:10.12px;color:#666;transform:scaleX(0.7798);">Create Bodies</span>
<span class="t" style="left:245.6px;top:74.42px;font-size:8.1px;line-height:10.12px;color:#666;transform:scaleX(0.8713);">Import</span>
<span class="t" style="left:291.25px;top:74.42px;font-size:8.1px;line-height:10.12px;color:#666;transform:scaleX(0.8538);">Annotations</span>
<span class="t" style="left:353.5px;top:74.42px;font-size:8.1px;line-height:10.12px;color:#666;transform:scaleX(0.7797);">Create Elements</span>
<span class="t" style="left:454px;top:74.42px;font-size:8.1px;line-height:10.12px;color:#666;transform:scaleX(0.9227);">Modify</span>
<span class="t" style="left:533.5px;top:74.42px;font-size:8.1px;line-height:10.12px;color:#666;transform:scaleX(0.8333);">Convert To</span>
<span class="t" style="left:590.5px;top:74.42px;font-size:8.1px;line-height:10.12px;color:#666;transform:scaleX(0.8625);">Attributes</span>
<span class="t" style="left:149.4px;top:88.12px;font-size:8.1px;line-height:10.12px;color:#333;transform:scaleX(0.8325);">Untitled1</span>
<span class="t" style="left:191.9px;top:88.12px;font-size:8.1px;line-height:10.12px;color:#333;transform:scaleX(0.8547);">pinewood.wm2d</span>
<span class="t" style="left:257.75px;top:88.12px;font-size:8.1px;line-height:10.12px;color:#333;transform:scaleX(0.8539);">controltest.wm2d</span>
<span class="t" style="left:325.6px;top:88.12px;font-size:8.1px;line-height:10.12px;color:#333;transform:scaleX(0.8893);">Man-lift.wm2d</span>
<span class="t" style="left:26.6px;top:88.12px;font-size:8.1px;line-height:10.12px;color:#fff;transform:scaleX(0.8746);">Motion Model</span>
<span class="t" style="left:37.4px;top:98.33px;font-size:8.1px;line-height:10.12px;color:#333;transform:scaleX(0.7879);">Bodies</span>
<span class="t" style="left:47.9px;top:108.54px;font-size:8.1px;line-height:10.12px;color:#333;transform:scaleX(0.8476);">Moving Bodies</span>
<span class="t" style="left:58.5px;top:118.75px;font-size:8.1px;line-height:10.12px;color:#333;transform:scaleX(0.8554);">Body[10] - Polygon</span>
<span class="t" style="left:58.5px;top:128.96px;font-size:8.1px;line-height:10.12px;color:#333;transform:scaleX(0.8554);">Body[16] - Polygon</span>
<span class="t" style="left:58.5px;top:139.17px;font-size:8.1px;line-height:10.12px;color:#333;transform:scaleX(0.8554);">Body[18] - Polygon</span>
<span class="t" style="left:58.5px;top:149.38px;font-size:8.1px;line-height:10.12px;color:#333;transform:scaleX(0.8577);">Body[2] - Polygon</span>
<span class="t" style="left:58.5px;top:159.59px;font-size:8.1px;line-height:10.12px;color:#333;transform:scaleX(0.8554);">Body[22] - Polygon</span>
<span class="t" style="left:58.5px;top:169.8px;font-size:8.1px;line-height:10.12px;color:#333;transform:scaleX(0.8554);">Body[33] - Polygon</span>
<span class="t" style="left:58.5px;top:180.01px;font-size:8.1px;line-height:10.12px;color:#333;transform:scaleX(0.8577);">Body[4] - Polygon</span>
<span class="t" style="left:58.5px;top:190.22px;font-size:8.1px;line-height:10.12px;color:#333;transform:scaleX(0.8554);">Body[41] - Polygon</span>
<span class="t" style="left:58.5px;top:200.43px;font-size:8.1px;line-height:10.12px;color:#333;transform:scaleX(0.8554);">Body[59] - Polygon</span>
<span class="t" style="left:58.5px;top:210.64px;font-size:8.1px;line-height:10.12px;color:#333;transform:scaleX(0.8577);">Body[6] - Polygon</span>
<span class="t" style="left:58.5px;top:220.85px;font-size:8.1px;line-height:10.12px;color:#333;transform:scaleX(0.8334);">Body[60] - Rectangle</span>
<span class="t" style="left:58.5px;top:231.06px;font-size:8.1px;line-height:10.12px;color:#333;transform:scaleX(0.8334);">Body[74] - Rectangle</span>
<span class="t" style="left:58.5px;top:241.27px;font-size:8.1px;line-height:10.12px;color:#333;transform:scaleX(0.8577);">Body[8] - Polygon</span>
<span class="t" style="left:58.5px;top:251.48px;font-size:8.1px;line-height:10.12px;color:#333;transform:scaleX(0.8334);">Body[85] - Rectangle</span>
<span class="t" style="left:58.5px;top:261.69px;font-size:8.1px;line-height:10.12px;color:#333;transform:scaleX(0.8334);">Body[89] - Rectangle</span>
<span class="t" style="left:47.9px;top:271.9px;font-size:8.1px;line-height:10.12px;color:#333;transform:scaleX(0.8254);">Grounded Bodies</span>
<span class="t" style="left:37.4px;top:282.11px;font-size:8.1px;line-height:10.12px;color:#333;transform:scaleX(0.8183);">Constraints</span>
<span class="t" style="left:47.9px;top:292.32px;font-size:8.1px;line-height:10.12px;color:#333;transform:scaleX(0.8035);">Joints</span>
<span class="t" style="left:47.9px;top:302.53px;font-size:8.1px;line-height:10.12px;color:#333;transform:scaleX(0.8479);">Actuators</span>
<span class="t" style="left:58.5px;top:312.74px;font-size:8.1px;line-height:10.12px;color:#333;transform:scaleX(0.8650);">Constraint[25] - Actuator</span>
<span class="t" style="left:58.5px;top:322.95px;font-size:8.1px;line-height:10.12px;color:#333;transform:scaleX(0.8650);">Constraint[44] - Actuator</span>
<span class="t" style="left:58.5px;top:333.16px;font-size:8.1px;line-height:10.12px;color:#333;transform:scaleX(0.8650);">Constraint[53] - Actuator</span>
<span class="t" style="left:58.5px;top:343.37px;font-size:8.1px;line-height:10.12px;color:#333;transform:scaleX(0.8687);">Constraint[72] - Motor</span>
<span class="t" style="left:58.5px;top:353.58px;font-size:8.1px;line-height:10.12px;color:#333;transform:scaleX(0.8650);">Constraint[79] - Actuator</span>
<span class="t" style="left:47.9px;top:363.79px;font-size:8.1px;line-height:10.12px;color:#333;transform:scaleX(0.8456);">Connectors</span>
<span class="t" style="left:58.5px;top:374.0px;font-size:8.1px;line-height:10.12px;color:#333;transform:scaleX(0.8421);">Constraint[81] - Rod</span>
<span class="t" style="left:69.1px;top:384.21px;font-size:8.1px;line-height:10.12px;color:#333;transform:scaleX(0.8554);">Body[22] - Polygon</span>
<span class="t" style="left:69.1px;top:394.42px;font-size:8.1px;line-height:10.12px;color:#333;transform:scaleX(0.8554);">Body[33] - Polygon</span>
<span class="t" style="left:47.9px;top:404.63px;font-size:8.1px;line-height:10.12px;color:#333;transform:scaleX(0.7938);">Generic</span>
<span class="t" style="left:37.4px;top:414.84px;font-size:8.1px;line-height:10.12px;color:#333;transform:scaleX(0.7677);">Forces</span>
<span class="t" style="left:37.4px;top:425.05px;font-size:8.1px;line-height:10.12px;color:#333;transform:scaleX(0.7593);">Results</span>
<span class="t" style="left:47.9px;top:435.26px;font-size:8.1px;line-height:10.12px;color:#333;transform:scaleX(0.8018);">Measures</span>
<span class="t" style="left:58.5px;top:445.47px;font-size:8.1px;line-height:10.12px;color:#333;transform:scaleX(0.8492);width:97.39px;overflow:hidden;">Output[38] - Actuator Force</span>
<span class="t" style="left:58.5px;top:455.68px;font-size:8.1px;line-height:10.12px;color:#333;transform:scaleX(0.8681);">Output[39] - Body Tilt</span>
<span class="t" style="left:58.5px;top:465.89px;font-size:8.1px;line-height:10.12px;color:#333;transform:scaleX(0.8369);width:98.82px;overflow:hidden;">Output[73] - Telescope Actu</span>
<span class="t" style="left:58.5px;top:476.1px;font-size:8.1px;line-height:10.12px;color:#333;transform:scaleX(0.8425);">Output[95] - Air Sound of P</span>
<span class="t" style="left:169px;top:174.13px;font-size:6.9px;line-height:8.62px;color:#000;transform:scaleX(0.8738);">Actuator Force</span>
<div style="position:absolute;left:152.9px;top:0;width:15.4px;height:585px;overflow:hidden"><span class="t" style="left:-0.7px;top:185.63px;font-size:6.9px;line-height:8.62px;color:#000;transform:scaleX(0.9841);">4000</span></div>
<div style="position:absolute;left:152.9px;top:0;width:15.4px;height:585px;overflow:hidden"><span class="t" style="left:0.0px;top:198.93px;font-size:6.9px;line-height:8.62px;color:#000;transform:scaleX(0.9385);">2000</span></div>
<div style="position:absolute;left:152.9px;top:0;width:15.4px;height:585px;overflow:hidden"><span class="t" style="left:4.9px;top:212.33px;font-size:6.9px;line-height:8.62px;color:#000;transform:scaleX(0.9902);">0.0</span></div>
<div style="position:absolute;left:151.3px;top:0;width:17.0px;height:585px;overflow:hidden"><span class="t" style="left:-0.7px;top:225.73px;font-size:6.9px;line-height:8.62px;color:#000;transform:scaleX(0.9475);">-2000</span></div>
<div style="position:absolute;left:152.9px;top:0;width:15.4px;height:585px;overflow:hidden"><span class="t" style="left:-3.0px;top:238.53px;font-size:6.9px;line-height:8.62px;color:#000;transform:scaleX(0.9872);">-4000</span></div>
<span class="t" style="left:163.4px;top:244.53px;font-size:6.9px;line-height:8.62px;color:#000;transform:scaleX(0.9590);">0.0</span>
<span class="t" style="left:200.6px;top:244.53px;font-size:6.9px;line-height:8.62px;color:#000;transform:scaleX(0.9590);">2.0</span>
<span class="t" style="left:237.3px;top:244.53px;font-size:6.9px;line-height:8.62px;color:#000;transform:scaleX(0.9590);">4.0</span>
<span class="t" style="left:274.0px;top:244.53px;font-size:6.9px;line-height:8.62px;color:#000;transform:scaleX(0.9590);">6.0</span>
<span class="t" style="left:172.4px;top:189.73px;font-size:6.9px;line-height:8.62px;color:#e00000;transform:scaleX(0.8091);">|F| (N)</span>
<span class="t" style="left:267.6px;top:234.83px;font-size:6.9px;line-height:8.62px;color:#000;transform:scaleX(0.8926);">t (s)</span>
<span class="t" style="left:171.8px;top:266.33px;font-size:6.9px;line-height:8.62px;color:#000;transform:scaleX(0.9000);">Telescope Actuator Length</span>
<span class="t" style="left:178.5px;top:276.73px;font-size:6.9px;line-height:8.62px;color:#000;transform:scaleX(1.0300);">dx</span>
<span class="t" style="left:212px;top:276.73px;font-size:6.9px;line-height:8.62px;color:#000;transform:scaleX(0.7982);">---</span>
<span class="t" style="left:195px;top:290.33px;font-size:6.9px;line-height:8.62px;color:#000;transform:scaleX(0.9078);">Body Tilt</span>
<span class="t" style="left:177px;top:301.53px;font-size:6.9px;line-height:8.62px;color:#000;transform:scaleX(0.8699);">rot</span>
<span class="t" style="left:212px;top:301.53px;font-size:6.9px;line-height:8.62px;color:#000;transform:scaleX(0.7784);">--- °</span>
<span class="t" style="left:32px;top:554.22px;font-size:7.6px;line-height:9.5px;color:#222;transform:scaleX(0.9143);font-weight:bold;">Run</span>
<span class="t" style="left:60.5px;top:554.22px;font-size:7.6px;line-height:9.5px;color:#a0a0a0;transform:scaleX(0.8889);font-weight:bold;">Stop</span>
<span class="t" style="left:91px;top:554.22px;font-size:7.6px;line-height:9.5px;color:#a0a0a0;transform:scaleX(0.9426);font-weight:bold;">Reset</span>
<span class="t" style="left:2.5px;top:575.62px;font-size:8.1px;line-height:10.12px;color:#333;transform:scaleX(0.8196);">Body[2]</span>
<span class="t" style="left:29px;top:575.62px;font-size:8.1px;line-height:10.12px;color:#333;transform:scaleX(0.8547);">Polygon</span>
<span class="t" style="left:824px;top:575.32px;font-size:8.1px;line-height:10.12px;color:#333;transform:scaleX(0.8115);">m, N, kg, deg, s</span>
<span class="t" style="left:36.2px;top:403.93px;font-size:8.6px;line-height:10.75px;color:#5050ff;transform:scaleX(0.7238);font-weight:bold;">?</span>
</div></body></html>
